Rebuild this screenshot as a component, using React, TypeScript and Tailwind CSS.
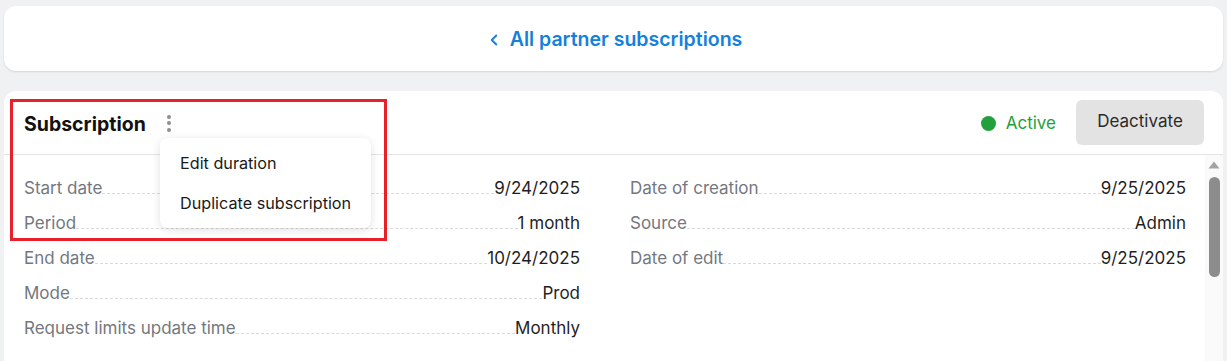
import { ChevronLeft } from 'lucide-react';

const leftRows = [
  { label: 'Start date', value: '9/24/2025' },
  { label: 'Period', value: '1 month' },
  { label: 'End date', value: '10/24/2025' },
  { label: 'Mode', value: 'Prod' },
  { label: 'Request limits update time', value: 'Monthly' }
];

const rightRows = [
  { label: 'Date of creation', value: '9/25/2025' },
  { label: 'Source', value: 'Admin' },
  { label: 'Date of edit', value: '9/25/2025' }
];

const InfoRow = ({ label, value }: { label: string; value: string }) => (
  <div className="flex h-[35px] items-baseline pt-[7px] text-[17px]">
    <span className="text-[#737880]">{label}</span>
    <span className="h-0 flex-1 border-b border-dashed border-[#dadada]" />
    <span className="text-[#1f1f1f]">{value}</span>
  </div>
);

const App = () => {
  return (
    <div
      className="relative h-[361px] overflow-hidden bg-[#f0f1f3] px-1 pt-1.5"
      style={{ fontFamily: 'Inter, "Noto Sans", sans-serif' }}
    >
      {/* back link */}
      <div className="flex h-[65px] items-center justify-center rounded-xl bg-white pt-[3px] shadow-[0_1px_2px_rgba(0,0,0,0.12)]">
        <a className="flex items-center gap-[7px] text-[19.5px] font-semibold text-[#1480dd]">
          <ChevronLeft size={18} strokeWidth={2.5} />
          All partner subscriptions
        </a>
      </div>

      {/* subscription card */}
      <div className="mt-5 rounded-t-xl bg-white">
        <div className="flex h-[64px] items-center justify-between border-b border-[#e4e4e4] pl-5 pr-[19px]">
          <div className="flex items-center gap-[17px] pt-[5px]">
            <h2 className="text-[19.5px] font-bold text-[#111]">Subscription</h2>
            <button className="flex flex-col items-center gap-[2.5px] px-1 pb-1">
              <span className="h-[4px] w-[4px] rounded-full bg-[#8a8f98]" />
              <span className="h-[4px] w-[4px] rounded-full bg-[#8a8f98]" />
              <span className="h-[4px] w-[4px] rounded-full bg-[#8a8f98]" />
            </button>
          </div>
          <div className="flex items-center gap-5">
            <div className="flex items-center gap-[10px] pt-[2px]">
              <span className="h-[15px] w-[15px] rounded-full bg-[#21a13b]" />
              <span className="text-[17px] text-[#1e9f3a]">Active</span>
            </div>
            <button className="h-[45px] w-[128px] rounded-md bg-[#e3e3e3] pb-[2px] text-[17px] text-[#2a2a2a]">
              Deactivate
            </button>
          </div>
        </div>

        <div className="flex h-[220px]">
          <div className="grid flex-1 grid-cols-2 content-start gap-x-[50px] pl-5 pr-[19px] pt-[14px]">
            <div>
              {leftRows.map((r) => (
                <InfoRow key={r.label} {...r} />
              ))}
            </div>
            <div>
              {rightRows.map((r) => (
                <InfoRow key={r.label} {...r} />
              ))}
            </div>
          </div>

          {/* scrollbar */}
          <div className="flex w-[18px] flex-col items-center bg-[#fafafa] pt-[6px]">
            <svg width="12" height="8" viewBox="0 0 12 8" className="mb-[8px]">
              <path d="M6 0.5 L11.5 7.5 L0.5 7.5 Z" fill="#a3a3a3" />
            </svg>
            <div className="h-[100px] w-[11px] rounded-full bg-[#8c8c8c]" />
          </div>
        </div>
      </div>

      {/* dropdown menu */}
      <div className="absolute left-[160px] top-[138px] w-[211px] rounded-lg bg-white py-[5px] shadow-[0_2px_10px_rgba(0,0,0,0.12)]">
        <div className="flex h-10 items-center whitespace-nowrap px-5 text-[16.2px] text-[#1a1a1a]">Edit duration</div>
        <div className="flex h-10 items-center whitespace-nowrap px-5 text-[16.2px] text-[#1a1a1a]">Duplicate subscription</div>
      </div>

      {/* annotation frame */}
      <div className="pointer-events-none absolute left-[10px] top-[99px] h-[142px] w-[377px] border-[3px] border-[#e8202a]" />
    </div>
  );
};

export default App;
